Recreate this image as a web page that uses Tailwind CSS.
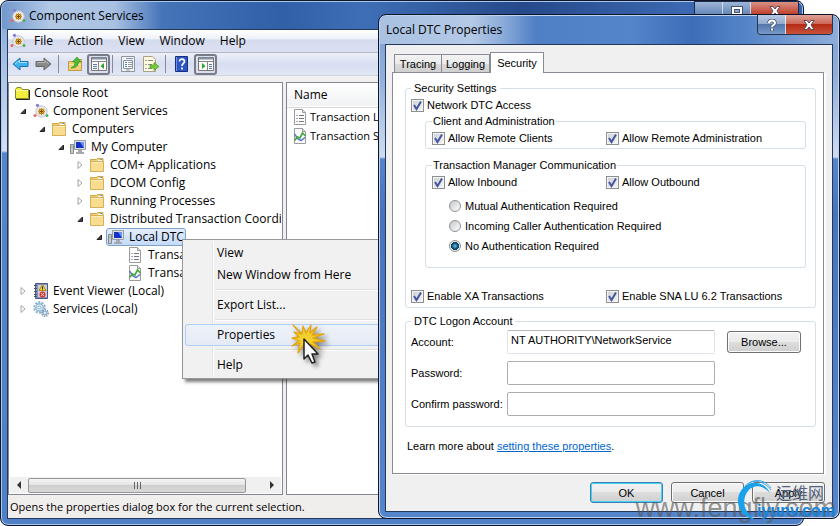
<!DOCTYPE html>
<html lang="en">
<head>
    <meta charset="UTF-8">
    <meta name="viewport" content="width=device-width, initial-scale=1.0">
    <title>Component Services</title>
    <script src="https://cdn.jsdelivr.net/npm/@tailwindcss/browser@4"></script>
</head>
<body class="relative min-h-screen overflow-hidden bg-white text-black font-['Open_Sans','Noto_Sans',sans-serif] text-[12px] leading-[18px]">

    <!-- Icon sprites -->
    <svg class="hidden">
        <symbol id="i-com" viewBox="0 0 16 16">
            <circle cx="8.500" cy="8.500" r="5.700" fill="#e9e9ee" stroke="#c3c5ce"/>
            <path d="M8.500 5v7M5 8.500h7M6 6l5 5M11 6l-5 5" stroke="#c8901a" stroke-width="1.300"/>
            <circle cx="8.500" cy="8.500" r="2.300" fill="#f4c429" stroke="#b37c10"/>
            <path d="M8.500 7v3M7 8.500h3" stroke="#704804"/>
            <circle cx="4.500" cy="2.300" r="1.600" fill="#8280d6"/>
            <circle cx="2" cy="12.500" r="1.500" fill="#de6a66"/>
            <circle cx="14" cy="12.500" r="1.500" fill="#4fae64"/>
        </symbol>
        <symbol id="i-root" viewBox="0 0 16 16">
            <path d="M1.500 4.500l1.500-2h4l1.500 2h6v9h-13z" fill="#f3ed3e" stroke="#8c8726"/>
            <path d="M2 5.500h12" stroke="#fffcae"/>
            <path d="M15.500 5v9.500H2" fill="none" stroke="#222"/>
        </symbol>
        <symbol id="i-folder" viewBox="0 0 16 16">
            <path d="M1.500 2.500h6l1-1h5.500v13h-12.500z" fill="#f0cf76" stroke="#d0a54b"/>
            <path d="M9 3.500h4" stroke="#fff"/>
            <path d="M11.500 2.500h1.500" stroke="#4f96df"/>
            <path d="M1.500 4.500h13v10h-13z" fill="#f8dd91" stroke="#d8b05a"/>
            <path d="M2.500 5.500h11" stroke="#fdeebd"/>
        </symbol>
        <symbol id="i-pc" viewBox="0 0 16 16">
            <path d="M.5 5.500h3v9h-3z" fill="#c9cdd0" stroke="#84898d"/>
            <path d="M1.500 8h1" stroke="#3ba43b"/>
            <path d="M4.500 1.500h11v9h-11z" fill="#dde0e4" stroke="#979da6"/>
            <path d="M6 3h8v6H6z" fill="#1632c4"/>
            <path d="M10 3h4v6z" fill="#6b93f5"/>
            <path d="M8 11h4v2h2v2H6v-2h2z" fill="#a6aab0"/>
        </symbol>
        <symbol id="i-list" viewBox="0 0 16 16">
            <path d="M2.500.5h8l3 3v12h-11z" fill="#fdfdfd" stroke="#9b9b9b"/>
            <path d="M10.500.5v3h3" fill="#ddd" stroke="#9b9b9b"/>
            <path d="M4.500 6.500h1M4.500 9.500h1M4.500 12.500h1" stroke="#4457a8"/>
            <path d="M7 6.500h5M7 9.500h5M7 12.500h5" stroke="#777"/>
        </symbol>
        <symbol id="i-stats" viewBox="0 0 16 16">
            <path d="M2.500.5h8l3 3v12h-11z" fill="#fdfdfd" stroke="#9b9b9b"/>
            <path d="M10.500.5v3h3" fill="#ddd" stroke="#9b9b9b"/>
            <path d="M2.500 6l3.500 5 3 1.500 4-3" fill="none" stroke="#5a78cf" stroke-width="1.500"/>
            <path d="M2.500 12.500l3-3.500 2.500 1 2.500-5 3 3" fill="none" stroke="#44a83c" stroke-width="1.700"/>
        </symbol>
        <symbol id="i-event" viewBox="0 0 16 16">
            <path d="M2.500.5h12v15h-12z" fill="#8492bc" stroke="#4c5884"/>
            <path d="M5 2h9v12H5z" fill="#c7cfe6"/>
            <path d="M1 2.500h3M1 5.500h3M1 8.500h3M1 11.500h3M1 13.500h3" stroke="#4a5470"/>
            <path d="M9.500 1.500l3.500 6H6z" fill="#f8d32c" stroke="#b08a0c"/>
            <path d="M9.500 3.500v3" stroke="#222"/>
            <circle cx="9.500" cy="11.500" r="3" fill="#d8382e"/>
            <path d="M8.300 10.300l2.400 2.400M10.700 10.300l-2.400 2.400" stroke="#fff"/>
        </symbol>
        <symbol id="i-gears" viewBox="0 0 16 16">
            <circle cx="6.500" cy="6.500" r="5.300" fill="none" stroke="#8fb3cf" stroke-width="2" stroke-dasharray="2 1.300"/>
            <circle cx="6.500" cy="6.500" r="3.700" fill="#e6f1f8" stroke="#8db6d3" stroke-width="1.400"/>
            <circle cx="6.500" cy="6.500" r="1.500" fill="#fff" stroke="#7ca6c6"/>
            <circle cx="12" cy="12" r="3.200" fill="none" stroke="#7f9db6" stroke-width="1.600" stroke-dasharray="1.400 1"/>
            <circle cx="12" cy="12" r="2" fill="#dcebf5" stroke="#789bb8"/>
        </symbol>
        <symbol id="i-open" viewBox="0 0 8 8"><path d="M6.500 2v4.500H2z" fill="#444" stroke="#222"/></symbol>
        <symbol id="i-closed" viewBox="0 0 8 8"><path d="M2 .5l4 3.500-4 3.500z" fill="#fff" stroke="#a3a3a3"/></symbol>
        <symbol id="i-check" viewBox="0 0 13 13">
            <path d="M3 6l2.500 4L10 2.500" fill="none" stroke="#44569f" stroke-width="2"/>
        </symbol>
        <symbol id="i-x" viewBox="0 0 12 10">
            <path d="M1 .5h3l2 2.500 2-2.500h3L8 5l3 4.500H8L6 7 4 9.500H1L4 5z" fill="#fff" stroke="#5b4a55"/>
        </symbol>
    </svg>

    <!-- Main console window -->
    <main class="absolute top-0 bottom-0 left-0 right-9 flex flex-col rounded-lg border border-[#10152a] p-[6px] pt-0 shadow-[inset_0_0_0_1px_#a9c8ee] bg-[linear-gradient(180deg,#7ba0d2_0px,#a4bfe4_60px,#d3e0f2_150px,#5585cb_152px,#4f7fc5_100%)]">
        <header class="-mx-[5px] mt-px flex h-[27px] shrink-0 items-center rounded-t-md pl-2 bg-[linear-gradient(90deg,#7197cc_0%,#b2c9e6_6%,#a9c2e3_14%,#4674b9_20%,#315fa8_35%,#3e6fb6_45%,#26498a_65%,#3b68b0_85%,#3462ad_100%)]">
            <svg class="size-4"><use href="#i-com"/></svg>
            <h1 class="ml-[3px]">Component Services</h1>
        </header>
        <div class="absolute top-0 right-1 flex h-4 border border-[#1b2b4d]">
            <button aria-label="Minimize" class="grid w-7 place-items-center border-r border-white/60 bg-linear-to-b from-[#9fb6d8] to-[#5d80b4]"><span class="mt-3 h-[5px] w-3 border border-slate-600 bg-white"></span></button>
            <button aria-label="Maximize" class="grid w-7 place-items-center border-r border-white/60 bg-linear-to-b from-[#9fb6d8] to-[#5d80b4]"><span class="mt-1 grid h-[10px] w-3 place-items-center border border-slate-600 bg-white"><span class="h-1 w-[6px] border border-slate-600 bg-[#8fa9cf]"></span></span></button>
            <button aria-label="Close" class="grid w-[47px] place-items-center bg-linear-to-b from-[#d79085] to-[#bb2c15]"><svg class="mt-1 h-[10px] w-3"><use href="#i-x"/></svg></button>
        </div>

        <div class="flex min-h-0 flex-1 flex-col border border-[#25375a] bg-[#f0f0f0]">
            <!-- Menu bar -->
            <nav class="flex h-[23px] shrink-0 items-center gap-[15px] border-b border-[#b4b9c8] bg-[linear-gradient(180deg,#ffffff_0%,#eef1f9_42%,#d5dbee_44%,#dbe0f2_100%)] pl-[2px]">
                <svg class="-mr-[7px] size-4"><use href="#i-com"/></svg>
                <button>File</button>
                <button>Action</button>
                <button>View</button>
                <button>Window</button>
                <button>Help</button>
            </nav>

            <!-- Toolbar -->
            <div class="flex h-[23px] shrink-0 items-center border-b border-[#d0d4e2] bg-linear-to-b from-[#edf0f9] via-[#d8def1] to-[#e2e7f6] pl-1">
                <button aria-label="Back"><svg class="h-[14px] w-[17px]" viewBox="0 0 17 14"><path d="M1 7l7-6v3.500h8v5H8V13z" fill="#3fb2ee" stroke="#1b70b5"/><path d="M3 7l4.500-3.500v2H15" fill="none" stroke="#a4e0fb"/></svg></button>
                <button aria-label="Forward" class="ml-[6px]"><svg class="h-[14px] w-[17px]" viewBox="0 0 17 14"><path d="M16 7L9 1v3.500H1v5h8V13z" fill="#8a8a8a" stroke="#666"/><path d="M2 5.500h8v-2L13.500 7" fill="none" stroke="#b9b9b9"/></svg></button>
                <span class="mx-[6px] h-[18px] w-px bg-[#868b98]"></span>
                <button aria-label="Up" class="ml-[2px]"><svg class="size-4" viewBox="0 0 16 16"><path d="M1.500 5.500h5l1.500-2h6.500v11h-13z" fill="#f2cf75" stroke="#c49a3f"/><path d="M2 8.500h12" stroke="#fbe9b4"/><path d="M4 12c3-1 4-4 4-6H5.500L10 1l4 5h-2.500c0 4-3 6-7.500 6z" fill="#4bbd36" stroke="#298a20" stroke-width=".6"/></svg></button>
                <button aria-label="Show console tree" class="ml-1 grid h-[21px] w-[23px] place-items-center rounded-[3px] border-2 border-[#787c88] bg-[#dcdfe9]"><svg class="size-4" viewBox="0 0 16 16"><path d="M.5 1.500h15v13H.5z" fill="#fafafa" stroke="#777"/><path d="M1 2.500h14" stroke="#8793a8" stroke-width="2"/><path d="M1 5.500h14M7.500 5v9" stroke="#888"/><path d="M2 8.500h4M2 10.500h4M2 12.500h4" stroke="#5c7cae"/><path d="M13 7v6L9.500 10z" fill="#2fa32a"/></svg></button>
                <span class="mx-[2px] h-[18px] w-px bg-[#868b98]"></span>
                <button aria-label="Properties" class="ml-[5px]"><svg class="size-4" viewBox="0 0 16 16"><path d="M1.500.5h13v15h-13z" fill="#f5f5f5" stroke="#8c949f"/><path d="M3.500 4.500h9v8h-9zM6 2.500h7" fill="#fff" stroke="#7f94ae"/><path d="M5 6.500h2M5 8.500h2M5 10.500h2" stroke="#4e80ba"/><path d="M8 6.500h4M8 8.500h4M8 10.500h4M6 14h4" stroke="#999"/></svg></button>
                <button aria-label="Export list" class="ml-[7px]"><svg class="size-4" viewBox="0 0 16 16"><path d="M.5.5h9l3 3v12H.5z" fill="#fff9df" stroke="#a9a185"/><path d="M2.500 4.500h1M2.500 8.500h1M2.500 12.500h1" stroke="#555"/><path d="M5 4.500h5M5 8.500h4M5 12.500h4" stroke="#888"/><path d="M7 9h4V6.500l5 4-5 4V12H7z" fill="#7dca37" stroke="#4c9824" stroke-width=".7"/></svg></button>
                <span class="mx-[6px] h-[18px] w-px bg-[#868b98]"></span>
                <button aria-label="Help" class="ml-[3px]"><svg class="h-4 w-[13px]" viewBox="0 0 13 16"><path d="M.5.5h12v15H.5z" fill="#2e55c5" stroke="#16327f"/><path d="M1.500 1v14" stroke="#7595e6"/><path d="M4.500 5.500C4.500 2 9.500 2.500 9.500 5.500c0 2-2.500 2-2.500 4.500M7 11.500v2" fill="none" stroke="#fff" stroke-width="1.700"/></svg></button>
                <button aria-label="Show action pane" class="ml-[6px] grid h-[21px] w-[23px] place-items-center rounded-[3px] border-2 border-[#787c88] bg-[#dcdfe9]"><svg class="size-4" viewBox="0 0 16 16"><path d="M.5 1.500h15v13H.5z" fill="#fafafa" stroke="#777"/><path d="M1 2.500h14" stroke="#8793a8" stroke-width="2"/><path d="M1 5.500h14M9.500 5v9" stroke="#888"/><path d="M11 8.500h3M11 10.500h3M11 12.500h3" stroke="#5c7cae"/><path d="M4 7v6l3.500-3z" fill="#2fa32a"/></svg></button>
            </div>

            <div class="mt-[6px] flex min-h-0 flex-1 gap-[3px]">
                <!-- Console tree -->
                <section class="flex w-[275px] shrink-0 flex-col border border-[#828790] bg-white">
                    <ul class="mr-px min-h-0 flex-1 overflow-hidden whitespace-nowrap pt-px pl-[5px] [&_li]:flex [&_li]:h-[18px] [&_li]:items-center [&_svg]:shrink-0">
                        <li><svg class="mr-1 size-4"><use href="#i-root"/></svg>Console Root</li>
                        <li class="pl-[5px]"><svg class="mr-[6px] size-2"><use href="#i-open"/></svg><svg class="mr-1 size-4"><use href="#i-com"/></svg>Component Services</li>
                        <li class="pl-6"><svg class="mr-[5px] size-2"><use href="#i-open"/></svg><svg class="mr-[5px] size-4"><use href="#i-folder"/></svg>Computers</li>
                        <li class="pl-[43px]"><svg class="mr-[5px] size-2"><use href="#i-open"/></svg><svg class="mr-[5px] size-4"><use href="#i-pc"/></svg>My Computer</li>
                        <li class="pl-[62px]"><svg class="mr-[5px] size-2"><use href="#i-closed"/></svg><svg class="mr-[5px] size-4"><use href="#i-folder"/></svg>COM+ Applications</li>
                        <li class="pl-[62px]"><svg class="mr-[5px] size-2"><use href="#i-closed"/></svg><svg class="mr-[5px] size-4"><use href="#i-folder"/></svg>DCOM Config</li>
                        <li class="pl-[62px]"><svg class="mr-[5px] size-2"><use href="#i-closed"/></svg><svg class="mr-[5px] size-4"><use href="#i-folder"/></svg>Running Processes</li>
                        <li class="pl-[62px]"><svg class="mr-[5px] size-2"><use href="#i-open"/></svg><svg class="mr-[5px] size-4"><use href="#i-folder"/></svg>Distributed Transaction Coordinator</li>
                        <li class="pl-[81px]"><svg class="mr-[3px] size-2"><use href="#i-open"/></svg><span class="flex h-[18px] items-center rounded-[3px] border border-[#7da2ce] bg-linear-to-b from-[#e4eefc] to-[#c3dafb] px-px"><svg class="mr-[5px] size-4"><use href="#i-pc"/></svg>Local DTC</span></li>
                        <li class="pl-[113px]"><svg class="mr-[5px] size-4"><use href="#i-list"/></svg>Transaction List</li>
                        <li class="pl-[113px]"><svg class="mr-[5px] size-4"><use href="#i-stats"/></svg>Transaction Statistics</li>
                        <li class="pl-[5px]"><svg class="mr-[6px] size-2"><use href="#i-closed"/></svg><svg class="mr-1 size-4"><use href="#i-event"/></svg>Event Viewer (Local)</li>
                        <li class="pl-[5px]"><svg class="mr-[6px] size-2"><use href="#i-closed"/></svg><svg class="mr-1 size-4"><use href="#i-gears"/></svg>Services (Local)</li>
                    </ul>
                    <!-- Horizontal scrollbar -->
                    <div class="mx-px mb-px flex h-4 shrink-0 items-center bg-[#f0f0f0]">
                        <button aria-label="Scroll left" class="grid w-[18px] place-items-center"><svg class="size-2" viewBox="0 0 8 8"><path d="M6 0v8L2 4z" fill="#333"/></svg></button>
                        <div class="flex h-[15px] w-[218px] items-center justify-center gap-[2px] rounded-[2px] border border-[#979797] bg-[linear-gradient(180deg,#f4f4f4_0%,#e6e6e6_45%,#cfcfcf_50%,#d8d8d8_100%)]">
                            <span class="h-[7px] w-px bg-[#666]"></span>
                            <span class="h-[7px] w-px bg-[#666]"></span>
                            <span class="h-[7px] w-px bg-[#666]"></span>
                        </div>
                        <button aria-label="Scroll right" class="ml-auto grid w-[18px] place-items-center"><svg class="size-2" viewBox="0 0 8 8"><path d="M2 0v8l4-4z" fill="#333"/></svg></button>
                    </div>
                </section>

                <!-- Result list -->
                <section class="flex-1 overflow-hidden border border-[#828790] bg-white">
                    <table class="w-full">
                        <thead>
                            <tr class="h-6 border-b border-[#d5d5d5] bg-linear-to-b from-white to-[#f1f2f4]"><th class="pl-[7px] text-left font-normal">Name</th></tr>
                        </thead>
                        <tbody class="text-[11px]">
                            <tr class="h-[19px]"><td><span class="flex items-center gap-[2px] pl-[5px]"><svg class="size-4"><use href="#i-list"/></svg>Transaction List</span></td></tr>
                            <tr class="h-[19px]"><td><span class="flex items-center gap-[2px] pl-[5px]"><svg class="size-4"><use href="#i-stats"/></svg>Transaction Statistics</span></td></tr>
                        </tbody>
                    </table>
                </section>
            </div>

            <!-- Status bar -->
            <footer class="mt-[2px] h-[21px] shrink-0 bg-[#f0eded] pt-px pl-[2px] text-[11px]">Opens the properties dialog box for the current selection.</footer>
        </div>
    </main>

    <!-- Context menu -->
    <div role="menu" class="absolute top-[239px] left-[182px] w-60 border border-[#979797] bg-[#f1f1f1] p-[2px] shadow-[3px_3px_3px_rgba(0,0,0,0.5)] [&>button]:block [&>button]:h-[22px] [&>button]:w-full [&>button]:pl-8 [&>button]:text-left">
        <span class="absolute inset-y-[2px] left-[29px] w-[2px] border-r border-white bg-[#e2e3e3]"></span>
        <button role="menuitem">View</button>
        <button role="menuitem">New Window from Here</button>
        <hr class="my-[3px] ml-[30px] h-[2px] border-t border-b border-t-[#e0e0e0] border-b-white">
        <button role="menuitem">Export List...</button>
        <hr class="my-[3px] ml-[30px] h-[2px] border-t border-b border-t-[#e0e0e0] border-b-white">
        <button role="menuitem" class="relative rounded-[3px] bg-linear-to-b from-[#eef2f9] to-[#e4eaf5] shadow-[inset_0_0_0_1px_#aecff7]">Properties</button>
        <hr class="my-[3px] ml-[30px] h-[2px] border-t border-b border-t-[#e0e0e0] border-b-white">
        <button role="menuitem">Help</button>
        <!-- Click burst and pointer -->
        <svg class="absolute top-[83px] left-[107px] h-[44px] w-[38px] drop-shadow-[3px_3px_2px_rgba(0,0,0,0.45)]" viewBox="0 0 38 44">
            <path d="M3 2l9 9 1-8 3 7 5-8-1 8 7-6-5 8 12-1-11 4 12 3-12 1 7 7-10-5-4 5-2-5-6 9 2-10-8 3 7-5-7-3 7-1-5-5 7 2z" fill="#f2cf2e" stroke="#e5a50e" stroke-width="1.300" stroke-linejoin="round"/>
            <path d="M14 16v20l4-4 4 8 3-1-3-8h6z" fill="#fff" stroke="#222" stroke-width="1.500" stroke-linejoin="round"/>
        </svg>
    </div>

    <!-- Properties dialog -->
    <section role="dialog" aria-labelledby="dlg-title" class="absolute top-[14px] right-0 bottom-[7px] left-[378px] flex flex-col rounded-lg border border-[#10152a] p-[6px] pt-0 shadow-[inset_0_0_0_1px_#bcd4f2] bg-[linear-gradient(180deg,#7c9fd1_0px,#8faedb_60px,#cfddf1_142px,#5585cb_144px,#4675bb_200px,#5585cb_100%)]">
        <header class="-mx-[5px] mt-px flex h-7 shrink-0 items-center rounded-t-md pl-[6px] bg-[linear-gradient(90deg,#a9c1e2_0%,#b4c9e6_20%,#8aabd9_27%,#4f7fc5_34%,#5484c9_55%,#3d6db8_68%,#5585c8_80%,#8fadd9_100%)]">
            <h2 id="dlg-title" class="pb-px">Local DTC Properties</h2>
        </header>
        <div class="absolute top-0 right-[6px] flex h-5 overflow-hidden rounded-b-[4px] border border-t-0 border-[#26344f]">
            <button aria-label="Help" class="grid w-7 place-items-center border-r border-white/70 bg-[linear-gradient(180deg,#b7c8e1_0%,#94acd0_45%,#5478ad_50%,#7799cb_100%)]"><svg class="h-3 w-[10px]" viewBox="0 0 10 12"><path d="M2 4c0-3.500 6-3.500 6 0 0 2-3 2-3 4M5 9.500V12" fill="none" stroke="#4c5568" stroke-width="3.600"/><path d="M2 4c0-3.500 6-3.500 6 0 0 2-3 2-3 4M5 9.500v2" fill="none" stroke="#fff" stroke-width="2"/></svg></button>
            <button aria-label="Close" class="grid w-[46px] place-items-center bg-[linear-gradient(180deg,#dea298_0%,#cd6a5a_45%,#b52a14_50%,#c9523b_100%)]"><svg class="h-[10px] w-3"><use href="#i-x"/></svg></button>
        </div>

        <div class="flex flex-1 flex-col border border-[#25375a] bg-[#f0f0f0] px-[6px] pt-[7px] pb-2 font-['Liberation_Sans',Arial,sans-serif] text-[11px] leading-[14px]">
            <!-- Tabs -->
            <div role="tablist" class="relative -mb-px flex items-end pl-[2px]">
                <button role="tab" class="mb-px h-[18px] w-12 border border-b-0 border-[#898c95] bg-[linear-gradient(180deg,#f3f3f3_0%,#ebebeb_50%,#dadada_52%,#d0d0d0_100%)]">Tracing</button>
                <button role="tab" class="mb-px h-[18px] w-12 border border-b-0 border-l-0 border-[#898c95] bg-[linear-gradient(180deg,#f3f3f3_0%,#ebebeb_50%,#dadada_52%,#d0d0d0_100%)]">Logging</button>
                <button role="tab" aria-selected="true" class="h-[21px] w-[54px] border border-b-0 border-[#898c95] bg-white">Security</button>
            </div>

            <div role="tabpanel" class="mr-[2px] flex-1 border border-[#898c95] bg-white pt-2 pr-[7px] pl-3 shadow-[2px_1px_0_#fff]">
                <fieldset class="rounded-[3px] border border-[#d5dfe5] px-[5px] pb-[1px]">
                    <legend class="px-[3px]">Security Settings</legend>
                    <label class="mt-[2px] flex h-4 items-center gap-[3px]"><span class="grid"><input type="checkbox" checked class="col-start-1 row-start-1 size-[13px] appearance-none border border-[#8e8f8f] bg-linear-to-br from-[#cbcfd5] to-[#f6f6f6] shadow-[inset_0_0_0_1px_#f4f4f4]"><svg class="pointer-events-none col-start-1 row-start-1 size-[13px]"><use href="#i-check"/></svg></span>Network DTC Access</label>

                    <fieldset class="mt-px mr-1 ml-[14px] rounded-[3px] border border-[#d5dfe5] px-[6px]">
                        <legend class="px-px">Client and Administration</legend>
                        <div class="grid h-5 grid-cols-[174px_1fr]">
                            <label class="flex items-center gap-[3px]"><span class="grid"><input type="checkbox" checked class="col-start-1 row-start-1 size-[13px] appearance-none border border-[#8e8f8f] bg-linear-to-br from-[#cbcfd5] to-[#f6f6f6] shadow-[inset_0_0_0_1px_#f4f4f4]"><svg class="pointer-events-none col-start-1 row-start-1 size-[13px]"><use href="#i-check"/></svg></span>Allow Remote Clients</label>
                            <label class="flex items-center gap-[3px]"><span class="grid"><input type="checkbox" checked class="col-start-1 row-start-1 size-[13px] appearance-none border border-[#8e8f8f] bg-linear-to-br from-[#cbcfd5] to-[#f6f6f6] shadow-[inset_0_0_0_1px_#f4f4f4]"><svg class="pointer-events-none col-start-1 row-start-1 size-[13px]"><use href="#i-check"/></svg></span>Allow Remote Administration</label>
                        </div>
                    </fieldset>

                    <fieldset class="mt-[9px] mr-1 ml-[14px] rounded-[3px] border border-[#d5dfe5] px-[6px] pb-[11px]">
                        <legend class="px-px">Transaction Manager Communication</legend>
                        <div class="grid h-5 grid-cols-[174px_1fr]">
                            <label class="flex items-center gap-[3px]"><span class="grid"><input type="checkbox" checked class="col-start-1 row-start-1 size-[13px] appearance-none border border-[#8e8f8f] bg-linear-to-br from-[#cbcfd5] to-[#f6f6f6] shadow-[inset_0_0_0_1px_#f4f4f4]"><svg class="pointer-events-none col-start-1 row-start-1 size-[13px]"><use href="#i-check"/></svg></span>Allow Inbound</label>
                            <label class="flex items-center gap-[3px]"><span class="grid"><input type="checkbox" checked class="col-start-1 row-start-1 size-[13px] appearance-none border border-[#8e8f8f] bg-linear-to-br from-[#cbcfd5] to-[#f6f6f6] shadow-[inset_0_0_0_1px_#f4f4f4]"><svg class="pointer-events-none col-start-1 row-start-1 size-[13px]"><use href="#i-check"/></svg></span>Allow Outbound</label>
                        </div>
                        <div class="mt-1 pl-[17px]">
                            <label class="flex h-5 items-center gap-1"><input type="radio" name="auth" class="size-3 appearance-none rounded-full border border-[#8e8f8f] bg-linear-to-br from-[#c4c8cd] to-white">Mutual Authentication Required</label>
                            <label class="flex h-5 items-center gap-1"><input type="radio" name="auth" class="size-3 appearance-none rounded-full border border-[#8e8f8f] bg-linear-to-br from-[#c4c8cd] to-white">Incoming Caller Authentication Required</label>
                            <label class="flex h-5 items-center gap-1"><input type="radio" name="auth" checked class="size-3 appearance-none rounded-full border border-[#8e8f8f] bg-[radial-gradient(circle_at_50%_50%,#5fc3ee_0px,#0f4a78_3px,#0f3a5c_4px,#f0f0f0_4px)]">No Authentication Required</label>
                        </div>
                    </fieldset>

                    <div class="mt-[18px] grid h-5 grid-cols-[195px_1fr]">
                        <label class="flex items-center gap-[3px]"><span class="grid"><input type="checkbox" checked class="col-start-1 row-start-1 size-[13px] appearance-none border border-[#8e8f8f] bg-linear-to-br from-[#cbcfd5] to-[#f6f6f6] shadow-[inset_0_0_0_1px_#f4f4f4]"><svg class="pointer-events-none col-start-1 row-start-1 size-[13px]"><use href="#i-check"/></svg></span>Enable XA Transactions</label>
                        <label class="flex items-center gap-[3px]"><span class="grid"><input type="checkbox" checked class="col-start-1 row-start-1 size-[13px] appearance-none border border-[#8e8f8f] bg-linear-to-br from-[#cbcfd5] to-[#f6f6f6] shadow-[inset_0_0_0_1px_#f4f4f4]"><svg class="pointer-events-none col-start-1 row-start-1 size-[13px]"><use href="#i-check"/></svg></span>Enable SNA LU 6.2 Transactions</label>
                    </div>
                </fieldset>

                <fieldset class="mt-[6px] rounded-[3px] border border-[#d5dfe5] px-[5px] pb-[10px]">
                    <legend class="px-[3px]">DTC Logon Account</legend>
                    <div class="mt-[2px] grid grid-cols-[96px_1fr_74px] items-center gap-y-[7px] pr-[9px]">
                        <label for="account">Account:</label>
                        <input id="account" type="text" value="NT AUTHORITY\NetworkService" class="mr-3 h-6 min-w-0 rounded-[2px] border border-[#dfe3ea] border-t-[#b5b7bd] px-[3px] pb-1">
                        <button class="h-[22px] rounded-[3px] border border-[#707070] bg-[linear-gradient(180deg,#f2f2f2_0%,#ebebeb_48%,#dddddd_50%,#cfcfcf_100%)] shadow-[inset_0_0_0_1px_#fbfbfb]">Browse...</button>
                        <label for="password">Password:</label>
                        <input id="password" type="password" class="mr-3 h-6 min-w-0 rounded-[2px] border border-[#abadb3] px-[3px]">
                        <span></span>
                        <label for="confirm">Confirm password:</label>
                        <input id="confirm" type="password" class="mr-3 h-6 min-w-0 rounded-[2px] border border-[#abadb3] px-[3px]">
                    </div>
                </fieldset>

                <p class="mt-3 pl-[2px]">Learn more about <a href="#" class="text-[#0066cc] underline">setting these properties</a>.</p>
            </div>

            <div class="mt-2 flex justify-end gap-2 pr-px">
                <button class="h-[21px] w-[73px] rounded-[3px] border border-[#3c7fb1] bg-[linear-gradient(180deg,#f2f2f2_0%,#ebebeb_48%,#dddddd_50%,#cfcfcf_100%)] shadow-[inset_0_0_0_1px_#46d0f5]">OK</button>
                <button class="h-[21px] w-[73px] rounded-[3px] border border-[#707070] bg-[linear-gradient(180deg,#f2f2f2_0%,#ebebeb_48%,#dddddd_50%,#cfcfcf_100%)] shadow-[inset_0_0_0_1px_#fbfbfb]">Cancel</button>
                <button class="h-[21px] w-[73px] rounded-[3px] border border-[#707070] bg-[linear-gradient(180deg,#f2f2f2_0%,#ebebeb_48%,#dddddd_50%,#cfcfcf_100%)] shadow-[inset_0_0_0_1px_#fbfbfb]">Apply</button>
            </div>
        </div>
    </section>

    <!-- Watermarks -->
    <div class="pointer-events-none absolute right-1 bottom-0 font-['Liberation_Sans',Arial,sans-serif] text-[27px] leading-9 text-[#555]/60">www.fengfly.com</div>
    <svg class="pointer-events-none absolute right-[62px] bottom-1 h-[44px] w-[42px]" viewBox="0 0 42 44">
        <path d="M34 15C29 4 15 1 7 10-3 21 2 38 19 42 8 34 5 22 12 13c6-7 15-6 22 2z" fill="#1ba1ea"/>
        <path d="M9 8C17 0 28 3 35 12M13 5c8-5 17-2 22 5" fill="none" stroke="#3da9e6"/>
    </svg>
    <div class="pointer-events-none absolute right-4 bottom-6 font-['Noto_Sans_CJK_SC',sans-serif] text-[16px] leading-5 text-[#52617a]">运维网</div>
    <div class="pointer-events-none absolute right-[5px] bottom-[7px] font-['Liberation_Sans',Arial,sans-serif] text-[16px] leading-4 font-bold text-[#1583d8]">iyunv.com</div>

</body>
</html>
